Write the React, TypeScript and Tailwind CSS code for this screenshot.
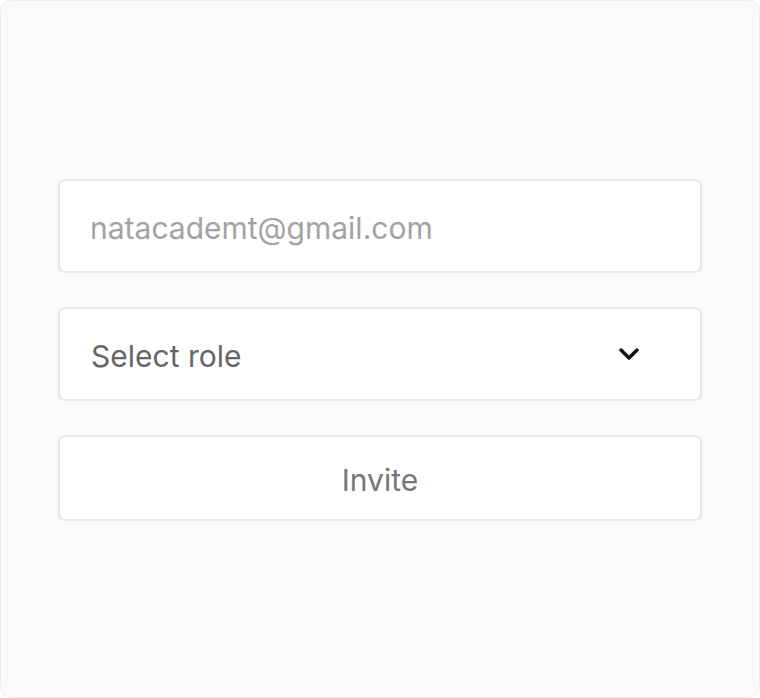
import { ChevronDown } from "lucide-react";

const App = () => {
    return (
        <div className="w-[760px] h-[698px] bg-white" style={{ fontFamily: "Inter, 'Noto Sans', sans-serif" }}>
            <div className="w-full h-full bg-[#fafafa] border border-[#ebebeb] rounded-[12px] px-[57px] pt-[178px] flex flex-col gap-[34px]">
                <div className="h-[94px] bg-white border-2 border-[#e8e8e8] rounded-[7px] flex items-center px-[30px] pt-[4px]">
                    <span className="text-[30px] text-[#a3a3a3]">natacademt@gmail.com</span>
                </div>
                <div className="h-[94px] bg-white border-2 border-[#e8e8e8] rounded-[7px] flex items-center justify-between pl-[31px] pr-[55px]">
                    <span className="text-[30px] text-[#666666] pt-[4px]">Select role</span>
                    <ChevronDown size={32} strokeWidth={2.6} className="text-[#111]" />
                </div>
                <button className="h-[86px] bg-white border-2 border-[#e8e8e8] rounded-[7px] flex items-center justify-center pt-[4px]">
                    <span className="text-[30px] text-[#777777]">Invite</span>
                </button>
            </div>
        </div>
    );
};

export default App;
